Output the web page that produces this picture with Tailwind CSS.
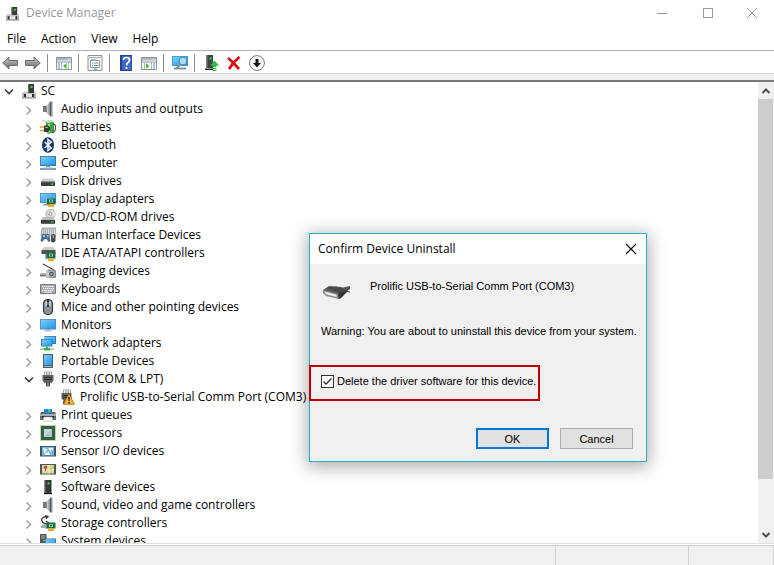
<!DOCTYPE html>
<html lang="en">
<head>
<meta charset="utf-8">
<meta name="viewport" content="width=device-width, initial-scale=1">
<title>Device Manager</title>
<script src="https://cdn.jsdelivr.net/npm/@tailwindcss/browser@4"></script>
</head>
<body class="relative flex h-screen flex-col overflow-hidden bg-white font-['Open_Sans',sans-serif] text-[12px] leading-[18px] text-black">

<svg class="absolute size-0" aria-hidden="true">
  <defs>
    <linearGradient id="g-blue" x1="0" y1="0" x2="1" y2="1"><stop offset="0" stop-color="#7fd0fb"/><stop offset="1" stop-color="#1f95e6"/></linearGradient>
    <linearGradient id="g-gray" x1="0" y1="0" x2="0" y2="1"><stop offset="0" stop-color="#c4c4c4"/><stop offset="1" stop-color="#6d6d6d"/></linearGradient>
    <linearGradient id="g-spk" x1="0" y1="0" x2="1" y2="0"><stop offset="0" stop-color="#6b7074"/><stop offset=".35" stop-color="#c9cdd0"/><stop offset="1" stop-color="#6f7579"/></linearGradient>
  </defs>
  <symbol id="pc" viewBox="0 0 16 16"><path d="M7 1h6v9H7z" fill="#3b3b3b"/><path d="M7 1h1v9H7z" fill="#6a6a6a"/><path d="M9.500 3h2v2h-2z" fill="#35e03a"/><path d="M3 8.500h4V10h6V8.500h1.500L15 15H1l.5-5z" fill="#c9cbcc"/><path d="M1 10.500h14V15H1z" fill="#b4b6b8"/><path d="M1 14.500h14v1H1z" fill="#85888b"/><path d="M3 11h2v3H3zM11 11h2v3h-2z" fill="#2c2c2c"/><path d="M5 11h6v3H5z" fill="#e4e6e6"/></symbol>
  <symbol id="speaker" viewBox="0 0 16 16"><path d="M3 5h3v6H3z" fill="#72797e"/><path d="M6 5l4.500-4.500v15L6 11z" fill="url(#g-spk)"/><path d="M10 .5h2.500v15H10z" fill="#8b9095"/><path d="M10.500 1v14" stroke="#555b60"/></symbol>
  <symbol id="battery" viewBox="0 0 16 16"><path d="M2 1q3 0 4 3" fill="none" stroke="#b5c3c8"/><path d="M6 2l6-1 2 3v9l-6 2-2-3z" fill="#3ca63a"/><path d="M6 2l6-1 1 2-6 1z" fill="#cfe9d0"/><path d="M8 5l2-.5V13l-2 .5z" fill="#a2e596"/><path d="M13 5q3 0 2.500 4T12 14" fill="none" stroke="#4c4c4c" stroke-width="1.200"/><path d="M0 8h4M0 11.500h4" stroke="#e8a800" stroke-width="1.500"/><path d="M4 6.500h4L10 8v3l-2 2H4z" fill="#3a3c3b"/><path d="M5 8h3v1H5z" fill="#a0a0a0"/></symbol>
  <symbol id="bluetooth" viewBox="0 0 16 16"><ellipse cx="8" cy="8" rx="6" ry="7.700" fill="#10376e"/><path d="M4.700 5l6.500 6L8 13.500v-11L11.200 5 4.700 11" fill="none" stroke="#fff" stroke-width="1.500"/></symbol>
  <symbol id="computer" viewBox="0 0 16 16"><path d="M0 1h16v10H0z" fill="#386b91"/><path d="M.7 1.700h14.600v8.600H.7z" fill="url(#g-blue)"/><path d="M6 11h4v2H6z" fill="#a8b1b7"/><path d="M0 13.200h16v1.600H0z" fill="#5d87a4"/><path d="M4 12.200h8v1H4z" fill="#c6d0d6"/></symbol>
  <symbol id="disk" viewBox="0 0 16 16"><path d="M3 5.500h10l2 3H1z" fill="#cfd0d1"/><path d="M1 8.500h14V13H1z" fill="#3e4142"/><path d="M1 8.500h14v.8H1z" fill="#85898a"/><path d="M11 10.500h2.200v1.300H11z" fill="#2de346"/></symbol>
  <symbol id="display" viewBox="0 0 16 16"><path d="M0 2h16v10H0z" fill="#4587b3"/><path d="M.7 2.700h14.600v8.600H.7z" fill="url(#g-blue)"/><path d="M4 13h5v1.500H3z" fill="#8b9ba5"/><path d="M7 7.500h8.500v6H7z" fill="#1f6c44"/><path d="M9 8.500h4v3H9z" fill="#8fd19c"/><path d="M10 9.300h2v1.400h-2z" fill="#1c6240"/><path d="M6.500 7v7" stroke="#a9b5ae"/><path d="M8 13.500h6V16H8z" fill="#f0ad22"/></symbol>
  <symbol id="dvd" viewBox="0 0 16 16"><circle cx="10.500" cy="5" r="4.700" fill="#d6d8d9" stroke="#9b9ea0" stroke-width=".7"/><path d="M10.500 5l4-2v4z" fill="#f5f5f5"/><circle cx="10.500" cy="5" r="1.500" fill="#fff" stroke="#888" stroke-width=".8"/><path d="M3 8h9l3 3H1z" fill="#b9bbbc"/><path d="M1 11h14v3.800H1z" fill="#3c3e3f"/><path d="M11 12.200h2.200v1.300H11z" fill="#2de346"/></symbol>
  <symbol id="hid" viewBox="0 0 16 16"><path d="M2 1h14v8H1z" fill="#d5d9dc" stroke="#85898c" stroke-width=".8"/><path d="M3 3h12M3 5h12M3 7h12" stroke="#777d82" stroke-dasharray="1 1"/><path d="M2 7h7l1.500 7-2 1-2-3h-2l-2 3-2-1z" fill="#4e6d88"/><path d="M3 9h2M7 9h1.500" stroke="#b9d9ee" stroke-width="1.500"/><rect x="11" y="7" width="4.500" height="8.500" rx="2.200" fill="#454b50"/><path d="M13.200 8v3" stroke="#a2c7de"/></symbol>
  <symbol id="ide" viewBox="0 0 16 16"><path d="M4 2h9l2.500 3H1.500z" fill="#cbcdcd"/><path d="M1.500 5h14v4h-14z" fill="#505354"/><path d="M6.500 7h9v6.500h-9z" fill="#1f6c44"/><path d="M9 8.500h4v3H9z" fill="#8fd19c"/><path d="M10 9.300h2v1.400h-2z" fill="#1c6240"/><path d="M6 6.500v8" stroke="#53645a"/><path d="M8 13.500h6V16H8z" fill="#f0ad22"/></symbol>
  <symbol id="imaging" viewBox="0 0 16 16"><path d="M3 1l11 6" stroke="#4b4d4e" stroke-width="1.300"/><path d="M0 10.500h7v3H0z" fill="#7a7d7f"/><path d="M0 10.500h7v1H0z" fill="#bfc1c2"/><path d="M6 7.500h2v-1h5l3 1V15H6z" fill="#898c8f"/><path d="M6 7.500h3V15H6z" fill="#c4c6c7"/><circle cx="11.500" cy="11" r="2.900" fill="#4c4f52" stroke="#e2e4e5" stroke-width=".8"/><circle cx="11.500" cy="11" r="1.100" fill="#a9cbe0"/></symbol>
  <symbol id="keyboard" viewBox="0 0 16 16"><path d="M.5 3.500h15v9H.5z" fill="#a7abae" stroke="#75797c"/><path d="M2 5.500h12M3 7.500h11M2 9.500h12" stroke="#fff" stroke-width="1.200" stroke-dasharray="1.300 .7"/><path d="M4 11.300h8" stroke="#f1f1f1"/></symbol>
  <symbol id="mouse" viewBox="0 0 16 16"><rect x="3.500" y=".5" width="9" height="15" rx="4.300" fill="#89939a" stroke="#373b3e" stroke-width="1.200"/><path d="M5 3q3-3 6 0v4H5z" fill="#bdc6cc"/><path d="M8 1v7" stroke="#292d30" stroke-width="2"/><path d="M8 3v3" stroke="#97c7e3"/></symbol>
  <symbol id="monitor" viewBox="0 0 16 16"><path d="M0 2h16v10.500H0z" fill="#4688b5"/><path d="M.7 2.700h14.600v9H.7z" fill="url(#g-blue)"/><path d="M6 12.500h4v1H6z" fill="#8da0ac"/><path d="M4 13.400h8v1H4z" fill="#a5b3bb"/></symbol>
  <symbol id="network" viewBox="0 0 16 16"><path d="M4.500 1H16v8H4.500z" fill="#2c74a6"/><path d="M5.200 1.700h10.100v6.600H5.200z" fill="url(#g-blue)"/><path d="M1 4h11.500v7.500H1z" fill="#2c74a6"/><path d="M1.700 4.700h10.100v6.100H1.700z" fill="url(#g-blue)"/><path d="M7 11.500v2" stroke="#5aa768" stroke-width="2"/><path d="M0 13.300h14v1.800H0z" fill="#b5bdb9"/><path d="M4 12.800h6v2.700H4z" fill="#37b253"/></symbol>
  <symbol id="portable" viewBox="0 0 16 16"><path d="M3 1h10v14H3z" fill="#4f5d66"/><path d="M4 2h8v10H4z" fill="url(#g-blue)"/><path d="M4 13h8v1H4z" fill="#aab5bc"/></symbol>
  <symbol id="port" viewBox="0 0 16 16"><path d="M4 .5h8V5H4z" fill="#a1a1a1"/><path d="M5.500 1v3M8 1v3M10.500 1v3" stroke="#fff"/><path d="M2.500 4h11v5.500L11.500 12h-7l-2-2.500z" fill="#606060"/><path d="M4 6.500h8M4 8.500h8" stroke="#2f2f2f"/><path d="M6 12h4v3.500H6z" fill="#484848"/><path d="M8 12v4" stroke="#bdbdbd"/></symbol>
  <symbol id="portwarn" viewBox="0 0 16 16"><path d="M3 .5h8V5H3z" fill="#a1a1a1"/><path d="M4.500 1v3M7 1v3M9.500 1v3" stroke="#fff"/><path d="M1.500 4h10v6L9 13H5L1.500 9.500z" fill="#606060"/><path d="M3 6.500h8M3 8.500h6" stroke="#2f2f2f"/><path d="M3 12h3v3H3z" fill="#484848"/><path d="M9 5l5.500 10.300h-11z" fill="#fbb53b" stroke="#ad6b0d" stroke-width=".8" stroke-linejoin="round"/><path d="M8.300 8h1.500l-.2 4H8.500zM8.300 13h1.500v1.400H8.300z" fill="#191000"/></symbol>
  <symbol id="printer" viewBox="0 0 16 16"><path d="M4 2h8v4H4z" fill="#1989d9"/><path d="M8 2h2v3H8z" fill="#43ce76"/><path d="M1 5h3v1h8V5h3l1 2v6H0V7z" fill="#656c70"/><path d="M0 7h16v2H0z" fill="#a5abae"/><path d="M2 9h12v1.500H2z" fill="#2e3234"/><path d="M4 10h8l1 4H3z" fill="#fff" stroke="#a3afb5" stroke-width=".6"/></symbol>
  <symbol id="cpu" viewBox="0 0 16 16"><path d="M.5 .5h15v15H.5z" fill="none" stroke="#b39b3c" stroke-dasharray="1 1"/><path d="M1 1h14v14H1z" fill="#276449"/><path d="M4 4h8v8H4z" fill="#d1d4d3"/><path d="M4 12l8-8v8z" fill="#bcc0be"/></symbol>
  <symbol id="sensorio" viewBox="0 0 16 16"><path d="M0 3h16v10.500H0z" fill="#435260"/><path d="M2 4h12v8.500H2z" fill="#7dbbdd"/><path d="M3 5l4 1-1 3-2 1zM8 5h5l-1 5-2-2zM5 10l4-1 1 3H5z" fill="#ecf4f5"/><path d="M11 6l2 3-1 2z" fill="#4e97bf"/></symbol>
  <symbol id="sensors" viewBox="0 0 16 16"><path d="M0 3h16v10.500H0z" fill="#4d594d"/><path d="M2 4h12v8.500H2z" fill="#c9dda1"/><path d="M2 9h12M9 4v8.500" stroke="#f1e5a4" stroke-width="1.500"/><path d="M10 8l4-2" stroke="#d4a956"/><circle cx="5.500" cy="6.200" r="1.700" fill="#e43e4e"/><path d="M5.500 7v3" stroke="#b9434c"/></symbol>
  <symbol id="software" viewBox="0 0 16 16"><path d="M4.500 1h7v13h-7z" fill="#343637"/><path d="M4.500 1h1v13h-1z" fill="#77797a"/><path d="M7.500 3.500h2v2h-2z" fill="#2ee54b"/><path d="M4 14h8v1.200H4z" fill="#1c1d1e"/></symbol>
  <symbol id="storage" viewBox="0 0 16 16"><path d="M6.500 1.500q-6 1-4.500 4.500t6 2.500M5 .5l3 1-2 2.300M6 6l3.500 2.500L6 10" fill="none" stroke="#373a3c" stroke-width="1.300"/><path d="M1 10.500l6-2v5l-6-.5z" fill="#a7abad"/><path d="M6.500 7.500h9v6h-9z" fill="#1f6c44"/><path d="M9 9h4v3H9z" fill="#8fd19c"/><path d="M10 9.800h2v1.400h-2z" fill="#1c6240"/><path d="M8 13.500h6V16H8z" fill="#f0ad22"/></symbol>
  <symbol id="system" viewBox="0 0 16 16"><path d="M0 1h6.500v13H0z" fill="#55585a"/><path d="M1 3h4M1 5h4" stroke="#a5a8aa"/><path d="M3 7h2v1.300H3z" fill="#2ee54b"/><path d="M5 5.500h11V13H5z" fill="#386b91"/><path d="M5.700 6.200h9.600V12H5.700z" fill="url(#g-blue)"/></symbol>
  <symbol id="open" viewBox="0 0 16 16"><path d="M4 6.500l4 4 4-4" fill="none" stroke="#404040" stroke-width="1.700"/></symbol>
  <symbol id="closed" viewBox="0 0 16 16"><path d="M5.500 5.500L9.500 9.500l-4 4" fill="none" stroke="#a6a6a6" stroke-width="1.700"/></symbol>
</svg>

<header class="flex h-[26px] shrink-0 items-center pl-[5px] text-[#999]">
  <svg class="size-[15px]"><use href="#pc"/></svg>
  <h1 class="ml-1.5 flex-1">Device Manager</h1>
  <button aria-label="Minimize" class="grid h-full w-[46px] place-items-center"><svg class="size-[12px]" viewBox="0 0 12 12"><path d="M1 6.500h10" stroke="#999"/></svg></button>
  <button aria-label="Maximize" class="grid h-full w-[45px] place-items-center"><svg class="size-[12px]" viewBox="0 0 12 12"><path d="M1.500 1.500h9v9h-9z" fill="none" stroke="#999"/></svg></button>
  <button aria-label="Close" class="grid h-full w-[44px] place-items-center"><svg class="size-[12px]" viewBox="0 0 12 12"><path d="M1 1l10 10M11 1L1 11" stroke="#999"/></svg></button>
</header>

<nav class="flex h-[25px] shrink-0 items-center gap-[15px] border-b border-[#b0b0b0] pt-0.5 pl-[7px]">
  <button>File</button><button>Action</button><button>View</button><button>Help</button>
</nav>

<div role="toolbar" aria-label="Tools" class="flex h-[23px] shrink-0 items-center border-b border-[#d5d5d5] pt-0.5 pl-0.5 [&>button]:size-4 [&>hr]:h-[18px] [&>hr]:w-px [&>hr]:border-0 [&>hr]:bg-[#8c8c8c]">
  <button aria-label="Back"><svg viewBox="0 0 16 16"><path d="M.7 8L7 2v3.500h8.500v5H7V14z" fill="url(#g-gray)" stroke="#6c6c6c"/></svg></button>
  <button aria-label="Forward" class="ml-[7px]"><svg viewBox="0 0 16 16"><path d="M15.300 8L9 2v3.500H.5v5H9V14z" fill="url(#g-gray)" stroke="#6c6c6c"/></svg></button>
  <hr class="mx-[6px]">
  <button aria-label="Show console tree" class="ml-0.5"><svg viewBox="0 0 16 16"><path d="M.5 2.500h15v12H.5z" fill="#fff" stroke="#8a959e"/><path d="M1 3h14v2.500H1z" fill="#aab5bf"/><path d="M11.500 4.200h1M13.500 4.200h1" stroke="#fff"/><path d="M1 7h14" stroke="#8a959e"/><path d="M5.500 7v7M12.500 7v7" stroke="#b1bac1"/><path d="M2 9h2M2 11h2M2 13h2" stroke="#428cc9"/><path d="M10.500 8v6L7 11z" fill="#4cb82b"/></svg></button>
  <hr class="mx-[6px]">
  <button aria-label="Properties" class="ml-0.5"><svg viewBox="0 0 16 16"><path d="M1 .5h14v15H1z" fill="#f5f5f5" stroke="#929292"/><path d="M2 2.500h12" stroke="#aaa"/><path d="M3.500 5.500h9v7h-9z" fill="#fff" stroke="#9b9b9b"/><path d="M4 5h5" stroke="#8faabb" stroke-width="1.500"/><path d="M5 8h1M5 10.500h1" stroke="#428cc9"/><path d="M7 8h4.500M7 10.500h4.500" stroke="#8a8a8a"/><path d="M7 14h3" stroke="#36bfe0" stroke-width="1.500"/></svg></button>
  <hr class="mx-[6px]">
  <button aria-label="Help" class="ml-0.5"><svg viewBox="0 0 16 16"><path d="M2 0h12v16H2z" fill="#23429d"/><path d="M4 1h9.500v14H4z" fill="#4468c5"/><path d="M5.500 5q0-2.500 3-2.500t3 2.500q0 1.500-1.500 2.500T8.500 10.500" fill="none" stroke="#fff" stroke-width="1.700"/><path d="M7.600 12h1.900v1.900H7.600z" fill="#fff"/></svg></button>
  <button aria-label="Show action pane" class="ml-[7px]"><svg viewBox="0 0 16 16"><path d="M.5 2.500h15v12H.5z" fill="#fff" stroke="#8a959e"/><path d="M1 3h14v2.500H1z" fill="#aab5bf"/><path d="M11.500 4.200h1M13.500 4.200h1" stroke="#fff"/><path d="M1 7h14" stroke="#8a959e"/><path d="M3.500 7v7M10.500 7v7" stroke="#b1bac1"/><path d="M12 9h2M12 11h2M12 13h2" stroke="#428cc9"/><path d="M5 8v6l3.500-3z" fill="#4cb82b"/></svg></button>
  <hr class="mx-[6px]">
  <button aria-label="Scan for hardware changes" class="ml-0.5"><svg viewBox="0 0 16 16"><path d="M0 1h16v10H0z" fill="#3d8dbd"/><path d="M.7 1.700h14.600v8.600H.7z" fill="url(#g-blue)"/><path d="M2 13.500h12" stroke="#6c8190" stroke-width="1.600"/><path d="M9 9l-5 5" stroke="#8b9498" stroke-width="2"/><circle cx="11" cy="6" r="3.900" fill="#a9def8" stroke="#528aab"/></svg></button>
  <hr class="mx-[6px]">
  <button aria-label="Update driver" class="ml-[3px]"><svg viewBox="0 0 16 16"><path d="M2 0h7v13H2z" fill="#414344"/><path d="M2 0h1.500v13H2z" fill="#7c7e7f"/><path d="M5.500 2.500h2v2h-2z" fill="#2ee54b"/><path d="M1 13.500h8V15H1z" fill="#292a2b"/><path d="M10.500 5.500L15 10.500h-2.500v1.500h-4v-1.500H6zM8.500 13h4v1h-4zM8.500 15h4v1h-4z" fill="#29bf38"/></svg></button>
  <button aria-label="Uninstall device" class="ml-[6px]"><svg viewBox="0 0 16 16"><path d="M2 3q5 4 11 11M13.500 2Q7 7 3 14" fill="none" stroke="#dc0c16" stroke-width="2.800"/></svg></button>
  <button aria-label="Disable device" class="ml-[7px]"><svg viewBox="0 0 16 16"><circle cx="8" cy="8" r="7.400" fill="#fff" stroke="#777"/><path d="M6.500 4h3v4H12l-4 4.500L4 8h2.500z" fill="#111"/></svg></button>
</div>
<div class="h-[8px] shrink-0 border-b-2 border-[#7a7a7a] bg-[#f0f0f0]"></div>

<main class="flex min-h-0 flex-1">
  <ul role="tree" aria-label="Devices" class="min-w-0 flex-1 overflow-hidden [&_button]:size-4 [&_li>div]:flex [&_li>div]:h-[18px] [&_li>div]:items-center [&_svg]:size-4 [&_svg]:shrink-0">
    <li>
      <div class="pl-px"><button aria-label="Collapse SC"><svg><use href="#open"/></svg></button><svg class="mr-1 ml-1"><use href="#pc"/></svg>SC</div>
      <ul class="[&>li>div]:gap-[5px] [&>li>div]:pl-[21px] [&>li>div>button]:-mr-0.5">
        <li><div><button aria-label="Expand"><svg><use href="#closed"/></svg></button><svg><use href="#speaker"/></svg>Audio inputs and outputs</div></li>
        <li><div><button aria-label="Expand"><svg><use href="#closed"/></svg></button><svg><use href="#battery"/></svg>Batteries</div></li>
        <li><div><button aria-label="Expand"><svg><use href="#closed"/></svg></button><svg><use href="#bluetooth"/></svg>Bluetooth</div></li>
        <li><div><button aria-label="Expand"><svg><use href="#closed"/></svg></button><svg><use href="#computer"/></svg>Computer</div></li>
        <li><div><button aria-label="Expand"><svg><use href="#closed"/></svg></button><svg><use href="#disk"/></svg>Disk drives</div></li>
        <li><div><button aria-label="Expand"><svg><use href="#closed"/></svg></button><svg><use href="#display"/></svg>Display adapters</div></li>
        <li><div><button aria-label="Expand"><svg><use href="#closed"/></svg></button><svg><use href="#dvd"/></svg>DVD/CD-ROM drives</div></li>
        <li><div><button aria-label="Expand"><svg><use href="#closed"/></svg></button><svg><use href="#hid"/></svg>Human Interface Devices</div></li>
        <li><div><button aria-label="Expand"><svg><use href="#closed"/></svg></button><svg><use href="#ide"/></svg>IDE ATA/ATAPI controllers</div></li>
        <li><div><button aria-label="Expand"><svg><use href="#closed"/></svg></button><svg><use href="#imaging"/></svg>Imaging devices</div></li>
        <li><div><button aria-label="Expand"><svg><use href="#closed"/></svg></button><svg><use href="#keyboard"/></svg>Keyboards</div></li>
        <li><div><button aria-label="Expand"><svg><use href="#closed"/></svg></button><svg><use href="#mouse"/></svg>Mice and other pointing devices</div></li>
        <li><div><button aria-label="Expand"><svg><use href="#closed"/></svg></button><svg><use href="#monitor"/></svg>Monitors</div></li>
        <li><div><button aria-label="Expand"><svg><use href="#closed"/></svg></button><svg><use href="#network"/></svg>Network adapters</div></li>
        <li><div><button aria-label="Expand"><svg><use href="#closed"/></svg></button><svg><use href="#portable"/></svg>Portable Devices</div></li>
        <li><div><button aria-label="Collapse"><svg><use href="#open"/></svg></button><svg><use href="#port"/></svg>Ports (COM &amp; LPT)</div>
          <ul><li><div class="gap-1 pl-[60px]"><svg><use href="#portwarn"/></svg>Prolific USB-to-Serial Comm Port (COM3)</div></li></ul>
        </li>
        <li><div><button aria-label="Expand"><svg><use href="#closed"/></svg></button><svg><use href="#printer"/></svg>Print queues</div></li>
        <li><div><button aria-label="Expand"><svg><use href="#closed"/></svg></button><svg><use href="#cpu"/></svg>Processors</div></li>
        <li><div><button aria-label="Expand"><svg><use href="#closed"/></svg></button><svg><use href="#sensorio"/></svg>Sensor I/O devices</div></li>
        <li><div><button aria-label="Expand"><svg><use href="#closed"/></svg></button><svg><use href="#sensors"/></svg>Sensors</div></li>
        <li><div><button aria-label="Expand"><svg><use href="#closed"/></svg></button><svg><use href="#software"/></svg>Software devices</div></li>
        <li><div><button aria-label="Expand"><svg><use href="#closed"/></svg></button><svg><use href="#speaker"/></svg>Sound, video and game controllers</div></li>
        <li><div><button aria-label="Expand"><svg><use href="#closed"/></svg></button><svg><use href="#storage"/></svg>Storage controllers</div></li>
        <li><div><button aria-label="Expand"><svg><use href="#closed"/></svg></button><svg><use href="#system"/></svg>System devices</div></li>
      </ul>
    </li>
  </ul>
  <div class="flex w-4 shrink-0 flex-col bg-[#f0f0f0]">
    <button aria-label="Scroll up" class="grid h-[17px] place-items-center"><svg class="size-[10px]" viewBox="0 0 10 10"><path d="M1.500 7L5 3.500 8.500 7" fill="none" stroke="#505050" stroke-width="2"/></svg></button>
    <div class="min-h-0 flex-1"><div class="mr-px h-[89%] bg-[#cdcdcd]"></div></div>
    <button aria-label="Scroll down" class="grid h-[17px] place-items-center"><svg class="size-[10px]" viewBox="0 0 10 10"><path d="M1.500 3L5 6.500 8.500 3" fill="none" stroke="#505050" stroke-width="2"/></svg></button>
  </div>
</main>

<footer class="flex h-[22px] shrink-0 border-t border-[#e0e0e0] pt-px">
  <div class="flex flex-1 border-t border-[#d2d2d2] bg-[#f0f0f0]">
    <div class="flex-1 border-r border-[#d2d2d2]"></div>
    <div class="w-[133px] border-r border-[#d2d2d2]"></div>
    <div class="w-[85px] border-r border-[#d2d2d2]"></div>
  </div>
</footer>

<section role="dialog" aria-labelledby="dlg-title" class="absolute top-[233px] left-[309px] w-[338px] border border-[#1cb5c5] bg-[#f0f0f0] pb-3 font-['Liberation_Sans',sans-serif] text-[11px] leading-[14px] shadow-[0_3px_16px_2px_rgba(0,0,0,0.32)]">
  <header class="flex h-[30px] items-center bg-white pl-2 font-['Open_Sans',sans-serif] text-[12px]">
    <h2 id="dlg-title" class="flex-1">Confirm Device Uninstall</h2>
    <button aria-label="Close dialog" class="grid h-full w-[30px] place-items-center"><svg class="size-[12px]" viewBox="0 0 12 12"><path d="M1 1l10 10M11 1L1 11" stroke="#111" stroke-width="1.200"/></svg></button>
  </header>
  <div class="flex gap-[19px] pt-[15px] pl-[13px]">
    <svg class="h-8 w-7 shrink-0" viewBox="0 0 28 32" aria-hidden="true"><path d="M18 9l9-2v3l-5 4z" fill="#555"/><path d="M0 11l6-4 12 1 7 3-4 4-3 4-3 1z" fill="#5a5a5a"/><path d="M4 8.500l9-1 9 3-5 4z" fill="#484848"/><path d="M0 11l15 4 1 5-13-3-3-3z" fill="#8c8c8c"/><path d="M1.500 12.500l12 3.200v2.200l-10.500-2.700z" fill="#ededed"/><path d="M15 15l7-4 3 1-6 6-3 2z" fill="#333"/><path d="M21 12l6 1" stroke="#444"/></svg>
    <p>Prolific USB-to-Serial Comm Port (COM3)</p>
  </div>
  <p class="mt-[13px] pl-[11px]">Warning: You are about to uninstall this device from your system.</p>
  <div class="mt-[27px] -ml-px flex h-9 w-[231px] items-center border-2 border-[#c00000] pb-1 pl-2.5">
    <label class="flex items-center gap-[3px] whitespace-nowrap">
      <span class="grid size-[13px] [&>*]:col-start-1 [&>*]:row-start-1">
        <input type="checkbox" checked class="peer size-[13px] appearance-none border border-[#333] bg-white">
        <svg class="pointer-events-none invisible size-[13px] peer-checked:visible" viewBox="0 0 13 13" aria-hidden="true"><path d="M2.500 6.500L5 9l5.500-5.500" fill="none" stroke="#333" stroke-width="1.300"/></svg>
      </span>
      Delete the driver software for this device.
    </label>
  </div>
  <div class="mt-[27px] flex justify-end gap-[11px] pr-[13px]">
    <button class="h-[21px] w-[73px] border-2 border-[#0078d7] bg-[#e1e1e1]">OK</button>
    <button class="h-[21px] w-[73px] border border-[#adadad] bg-[#e1e1e1]">Cancel</button>
  </div>
</section>
</body>
</html>
